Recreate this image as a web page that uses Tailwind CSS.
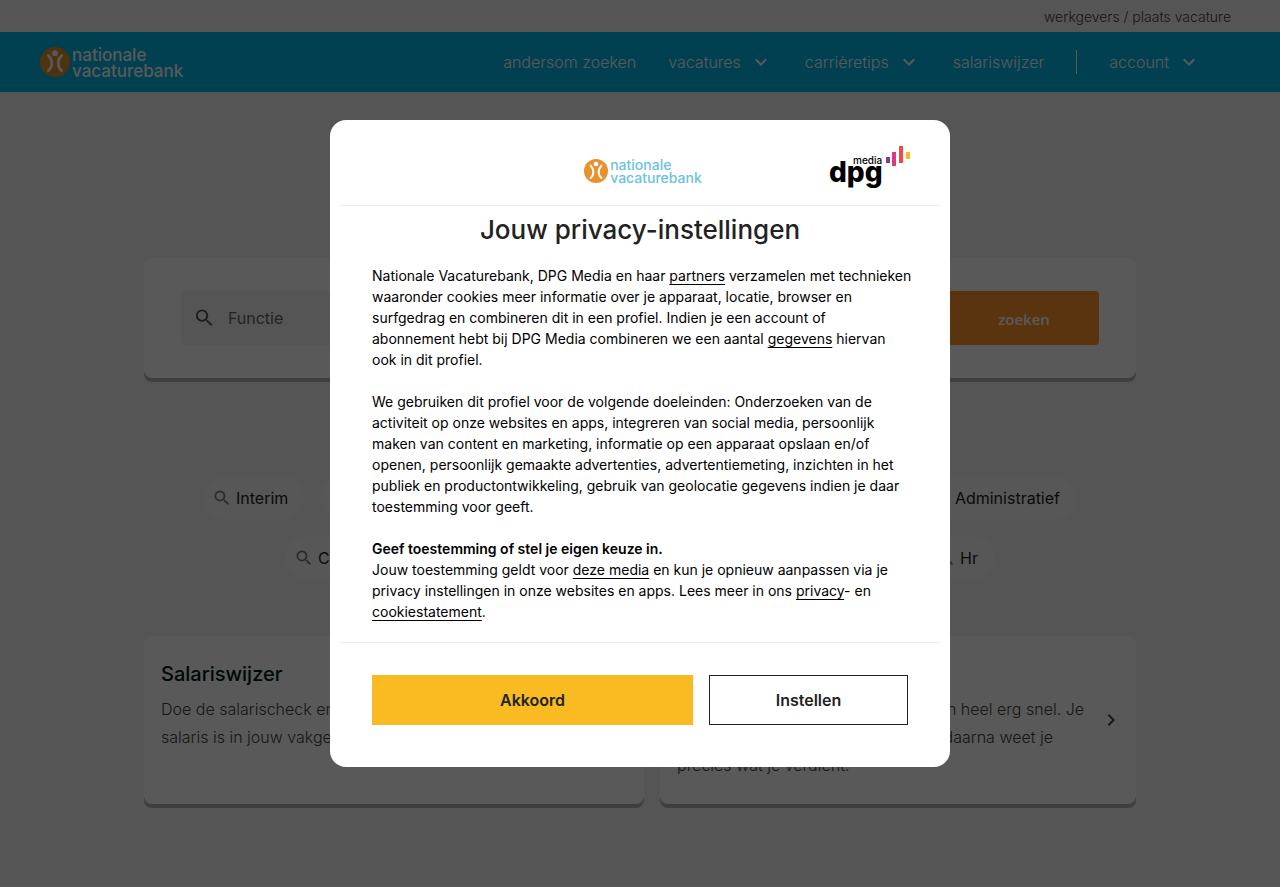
<!DOCTYPE html>
<html lang="nl">
<head>
<meta charset="utf-8">
<meta name="viewport" content="width=device-width, initial-scale=1">
<title>Nationale Vacaturebank</title>
<script src="https://cdn.jsdelivr.net/npm/@tailwindcss/browser@4"></script>
</head>
<body class="min-h-screen overflow-hidden bg-[#f3f3f3] font-['Inter',sans-serif] text-base text-[#222]">
<svg class="hidden" aria-hidden="true">
  <symbol id="search" viewBox="0 0 24 24"><path fill="currentColor" d="M15.5 14h-.79l-.28-.27A6.47 6.47 0 0 0 16 9.5 6.5 6.5 0 1 0 9.5 16c1.61 0 3.09-.59 4.23-1.57l.27.28v.79l5 4.99L20.49 19l-4.99-5zm-6 0C7.01 14 5 11.99 5 9.5S7.01 5 9.5 5 14 7.01 14 9.5 11.99 14 9.5 14z"/></symbol>
  <symbol id="down" viewBox="0 0 24 24"><path fill="currentColor" d="M7.41 8.59 12 13.17l4.59-4.58L18 10l-6 6-6-6z"/></symbol>
  <symbol id="figure" viewBox="0 0 30 30"><circle cx="15" cy="15" r="15" fill="#e8912d"/><g fill="none" stroke="#fff" stroke-width="2.6" stroke-linecap="round"><path d="M8.3 8.5c4.600 4.500 4.600 11 0 15.200M21.700 8.500c-4.600 4.500-4.600 11 0 15.200"/></g><circle cx="15" cy="6.200" r="2.900" fill="#fff"/></symbol>
</svg>

<div class="flex h-8 items-center justify-end px-[49px] pt-0.5 text-sm"><a href="#" class="font-light text-[#444]">werkgevers / plaats vacature</a></div>
<header class="flex h-[60px] items-center justify-between bg-[#00b7e4] pl-10 pr-[79px] font-light text-white">
  <a href="#" class="flex gap-0.5 pt-0.5" aria-label="Nationale Vacaturebank">
    <svg class="size-[30px]"><use href="#figure"/></svg>
    <span class="text-[17px] leading-4 font-medium">nationale<br>vacaturebank</span>
  </a>
  <nav class="flex items-center gap-8">
    <a href="#">andersom zoeken</a>
    <button class="flex items-center gap-2">vacatures <svg class="size-6"><use href="#down"/></svg></button>
    <button class="flex items-center gap-2">carrièretips <svg class="size-6"><use href="#down"/></svg></button>
    <a href="#">salariswijzer</a>
    <span class="h-6 w-px bg-white"></span>
    <button class="flex items-center gap-2">account <svg class="size-6"><use href="#down"/></svg></button>
  </nav>
</header>

<main class="mx-auto max-w-[992px] pt-[166px]">
  <form class="flex rounded-lg bg-white px-[37px] py-[33px] shadow-[0_4px_0_#b5b5b5]">
    <label class="flex h-[54px] flex-1 items-center gap-3 rounded bg-[#f3f3f3] px-3">
      <svg class="size-6 text-[#555]"><use href="#search"/></svg>
      <input type="text" placeholder="Functie" aria-label="Functie" class="w-full outline-none placeholder:text-[#666]">
    </label>
    <button type="button" class="w-[150px] rounded-r bg-[#ff942b] pt-0.5 font-['Open_Sans',sans-serif] text-[15px] font-semibold text-white">zoeken</button>
  </form>

  <section class="mt-[98px] flex flex-col gap-4">
    <div class="flex gap-4 px-[60px]">
      <a href="#" class="flex h-11 items-center gap-1 rounded-full bg-[#f9f9f9] pr-4 pl-2"><svg class="size-5 text-[#777]"><use href="#search"/></svg>Interim</a>
      <span class="flex-1 rounded-full bg-[#f9f9f9]"></span>
      <a href="#" class="flex h-11 items-center gap-1 rounded-full bg-[#f9f9f9] pr-4 pl-2"><svg class="size-5 text-[#777]"><use href="#search"/></svg>Administratief</a>
    </div>
    <div class="flex gap-4 px-[142px]">
      <a href="#" class="flex h-11 items-center gap-1 rounded-full bg-[#f9f9f9] pr-4 pl-2"><svg class="size-5 text-[#777]"><use href="#search"/></svg>Commercieel</a>
      <span class="flex-1 rounded-full bg-[#f9f9f9]"></span>
      <a href="#" class="flex h-11 items-center gap-1 rounded-full bg-[#f9f9f9] pr-4 pl-2"><svg class="size-5 text-[#777]"><use href="#search"/></svg>Hr</a>
    </div>
  </section>

  <section class="mt-14 grid grid-cols-[500fr_476fr] gap-4">
    <a href="#" class="h-[168px] rounded-lg bg-white px-[17px] pt-6 shadow-[0_4px_0_#b5b5b5]">
      <h2 class="text-xl leading-7 font-medium text-[#001818]">Salariswijzer</h2>
      <p class="mt-[7px] leading-7 font-light text-[#444]">Doe de salarischeck en kijk hoe hoog het<br>salaris is in jouw vakgebied.</p>
    </a>
    <a href="#" class="flex h-[168px] items-center gap-3 rounded-lg bg-white pr-[13px] pl-[17px] shadow-[0_4px_0_#b5b5b5]">
      <div class="flex-1 self-start pt-6">
        <h2 class="text-xl leading-7 font-medium text-[#001818]">Salarischeck</h2>
        <div class="mt-[7px] leading-7 font-light text-[#444]">
          <p class="flex w-[407px] justify-between"><span>De salarischeck</span><span>kan heel erg snel. Je</span></p>
          <p class="flex w-[376px] justify-between"><span>vult alles in en</span><span>daarna weet je</span></p>
          <p>precies wat je verdient.</p>
        </div>
      </div>
      <svg class="size-6 -rotate-90 text-[#444]"><use href="#down"/></svg>
    </a>
  </section>
</main>

<div class="fixed inset-0 flex items-center justify-center bg-black/65">
  <section role="dialog" aria-modal="true" aria-labelledby="title" class="w-full max-w-[620px] rounded-2xl bg-white px-2.5 text-[#222]">
    <header class="grid h-[86px] grid-cols-3 items-start border-b border-[#e9e9e9]">
      <span></span>
      <div class="mt-[38px] flex items-center justify-center gap-0.5 pl-1.5">
        <svg class="size-6"><use href="#figure"/></svg>
        <span class="text-sm leading-[13px] font-medium text-[#6cc3da]">nationale<br>vacaturebank</span>
      </div>
      <svg class="mt-[25px] mr-[29px] h-11 w-[82px] justify-self-end" viewBox="0 0 82 44" role="img" aria-label="DPG Media">
        <text x="0" y="37" font-family="Inter" font-weight="800" font-size="28" fill="#000">dpg</text>
        <text x="24" y="19" font-family="Inter" font-weight="500" font-size="10" fill="#000">media</text>
        <path fill="#7b3f98" d="M57 12h4v6h-4z"/><path fill="#d63a84" d="M63 7h4v14h-4z"/><path fill="#ee4b42" d="M70 1h4v17h-4z"/><path fill="#fabb22" d="M77 7h4v7h-4z"/>
      </svg>
    </header>
    <h1 id="title" class="mt-2 text-center text-[26px] leading-8 font-medium">Jouw privacy-instellingen</h1>
    <div class="px-8 pt-[19px] pb-5 text-sm leading-[21px] whitespace-nowrap text-black">
      <p>Nationale Vacaturebank, DPG Media en haar <a href="#" class="underline underline-offset-3">partners</a> verzamelen met technieken<br>waaronder cookies meer informatie over je apparaat, locatie, browser en<br>surfgedrag en combineren dit in een profiel. Indien je een account of<br>abonnement hebt bij DPG Media combineren we een aantal <a href="#" class="underline underline-offset-3">gegevens</a> hiervan<br>ook in dit profiel.</p>
      <p class="mt-[21px]">We gebruiken dit profiel voor de volgende doeleinden: Onderzoeken van de<br>activiteit op onze websites en apps, integreren van social media, persoonlijk<br>maken van content en marketing, informatie op een apparaat opslaan en/of<br>openen, persoonlijk gemaakte advertenties, advertentiemeting, inzichten in het<br>publiek en productontwikkeling, gebruik van geolocatie gegevens indien je daar<br>toestemming voor geeft.</p>
      <p class="mt-[21px]"><strong class="font-semibold">Geef toestemming of stel je eigen keuze in.</strong><br>Jouw toestemming geldt voor <a href="#" class="underline underline-offset-3">deze media</a> en kun je opnieuw aanpassen via je<br>privacy instellingen in onze websites en apps. Lees meer in ons <a href="#" class="underline underline-offset-3">privacy</a>- en<br><a href="#" class="underline underline-offset-3">cookiestatement</a>.</p>
    </div>
    <footer class="flex gap-4 border-t border-[#e9e9e9] px-8 pt-8 pb-[42px] font-semibold">
      <button class="h-[50px] flex-1 bg-[#fabb22]">Akkoord</button>
      <button class="h-[50px] w-[199px] border border-[#222]">Instellen</button>
    </footer>
  </section>
</div>
</body>
</html>
